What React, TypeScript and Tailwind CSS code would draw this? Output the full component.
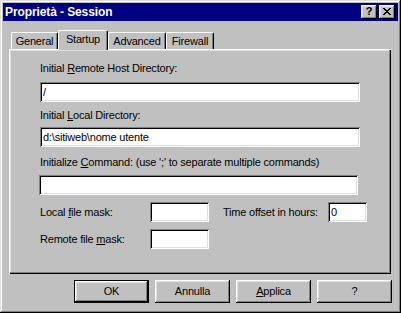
import React from "react";

const btnBevel =
  "shadow-[inset_-1px_-1px_#000,inset_1px_1px_#fff,inset_-2px_-2px_#808080,inset_2px_2px_#dfdfdf]";
const fieldBevel =
  "shadow-[inset_1px_1px_#808080,inset_-1px_-1px_#fff,inset_2px_2px_#000,inset_-2px_-2px_#dfdfdf]";

function XIcon() {
  return (
    <svg width="8" height="7" viewBox="0 0 8 7" shapeRendering="crispEdges">
      <path
        d="M0 0h2v1H0zM6 0h2v1H6zM1 1h2v1H1zM5 1h2v1H5zM2 2h4v1H2zM3 3h2v1H3zM2 4h4v1H2zM1 5h2v1H1zM5 5h2v1H5zM0 6h2v1H0zM6 6h2v1H6z"
        fill="#000"
      />
    </svg>
  );
}

function Field({ w, value }: { w: string; value?: string }) {
  return (
    <div className={`${w} h-[20px] bg-white ${fieldBevel} flex items-center pl-[3px] overflow-hidden whitespace-nowrap`}>
      {value}
    </div>
  );
}

function Btn({ children, def }: { children: React.ReactNode; def?: boolean }) {
  return (
    <div
      className={`w-[75px] h-[23px] bg-[#c0c0c0] flex items-center justify-center ${btnBevel} ${
        def ? "border border-black" : ""
      }`}
    >
      {children}
    </div>
  );
}

export default function App() {
  return (
    <div className="w-[401px] h-[313px] bg-[#c0c0c0] p-[3px] shadow-[inset_-1px_-1px_#000,inset_1px_1px_#dfdfdf,inset_-2px_-2px_#808080,inset_2px_2px_#fff] font-['Liberation_Sans',Arial,sans-serif] text-[11px] leading-[13px] tracking-[-0.2px] text-black select-none">
      {/* Title bar */}
      <div className="h-[18px] bg-[#000080] flex items-center pl-[2px] pr-[3px]">
        <span className="flex-1 text-white font-bold text-[12px] tracking-[-0.1px] leading-[14px]">
          Proprietà - Session
        </span>
        <div className="flex gap-[2px]">
          <div className={`w-[16px] h-[14px] bg-[#c0c0c0] ${btnBevel} flex items-center justify-center font-bold text-[11px] leading-none pb-[1px]`}>
            ?
          </div>
          <div className={`w-[16px] h-[14px] bg-[#c0c0c0] ${btnBevel} flex items-center justify-center pb-[1px]`}>
            <XIcon />
          </div>
        </div>
      </div>

      <div className="pl-[6px] pt-[9px]">
        {/* Tabs */}
        <div className="flex items-end h-[19px] pl-[2px]">
          <div className="w-[47px] h-[17px] border-l border-t border-r border-l-white border-t-white border-r-black rounded-t-[2px] shadow-[inset_-1px_0_#808080] pt-[2px] text-center">
            General
          </div>
          <div className="relative z-10 w-[50px] h-[20px] -mb-[1px] bg-[#c0c0c0] border-l border-t border-r border-l-white border-t-white border-r-black rounded-t-[2px] shadow-[inset_-1px_0_#808080] pt-[2px] text-center">
            Startup
          </div>
          <div className="w-[58px] h-[17px] border-l border-t border-r border-l-white border-t-white border-r-black rounded-t-[2px] shadow-[inset_-1px_0_#808080] pt-[2px] text-center">
            Advanced
          </div>
          <div className="w-[48px] h-[17px] border-l border-t border-r border-l-white border-t-white border-r-black rounded-t-[2px] shadow-[inset_-1px_0_#808080] pt-[2px] text-center">
            Firewall
          </div>
        </div>

        {/* Panel */}
        <div className="w-[382px] h-[225px] shadow-[inset_1px_1px_#fff,inset_-1px_-1px_#000,inset_-2px_-2px_#808080,inset_2px_2px_#dfdfdf] pl-[31px] pt-[13px] flex flex-col">
          <div className="h-[13px]">
            Initial <span className="underline">R</span>emote Host Directory:
          </div>
          <div className="mt-[7px]">
            <Field w="w-[320px]" value="/" />
          </div>
          <div className="h-[13px] mt-[7px]">
            Initial <span className="underline">L</span>ocal Directory:
          </div>
          <div className="mt-[5px]">
            <Field w="w-[320px]" value="d:\sitiweb\nome utente" />
          </div>
          <div className="h-[13px] mt-[9px] whitespace-nowrap">
            Initialize <span className="underline">C</span>ommand: (use ';' to separate multiple commands)
          </div>
          <div className="mt-[6px] -ml-[1px]">
            <Field w="w-[319px]" />
          </div>
          <div className="mt-[7px] flex items-center">
            <div className="w-[110px]">
              Local <span className="underline">f</span>ile mask:
            </div>
            <Field w="w-[59px]" />
            <div className="w-[105px] ml-[14px]">Time offset in hours:</div>
            <Field w="w-[39px]" value="0" />
          </div>
          <div className="mt-[7px] flex items-center">
            <div className="w-[110px]">
              Remote file <span className="underline">m</span>ask:
            </div>
            <Field w="w-[59px]" />
          </div>
        </div>

        {/* Buttons */}
        <div className="flex gap-[6px] ml-[65px] mt-[6px]">
          <Btn def>OK</Btn>
          <Btn>Annulla</Btn>
          <Btn>
            <span>
              <span className="underline">A</span>pplica
            </span>
          </Btn>
          <Btn>?</Btn>
        </div>
      </div>
    </div>
  );
}
